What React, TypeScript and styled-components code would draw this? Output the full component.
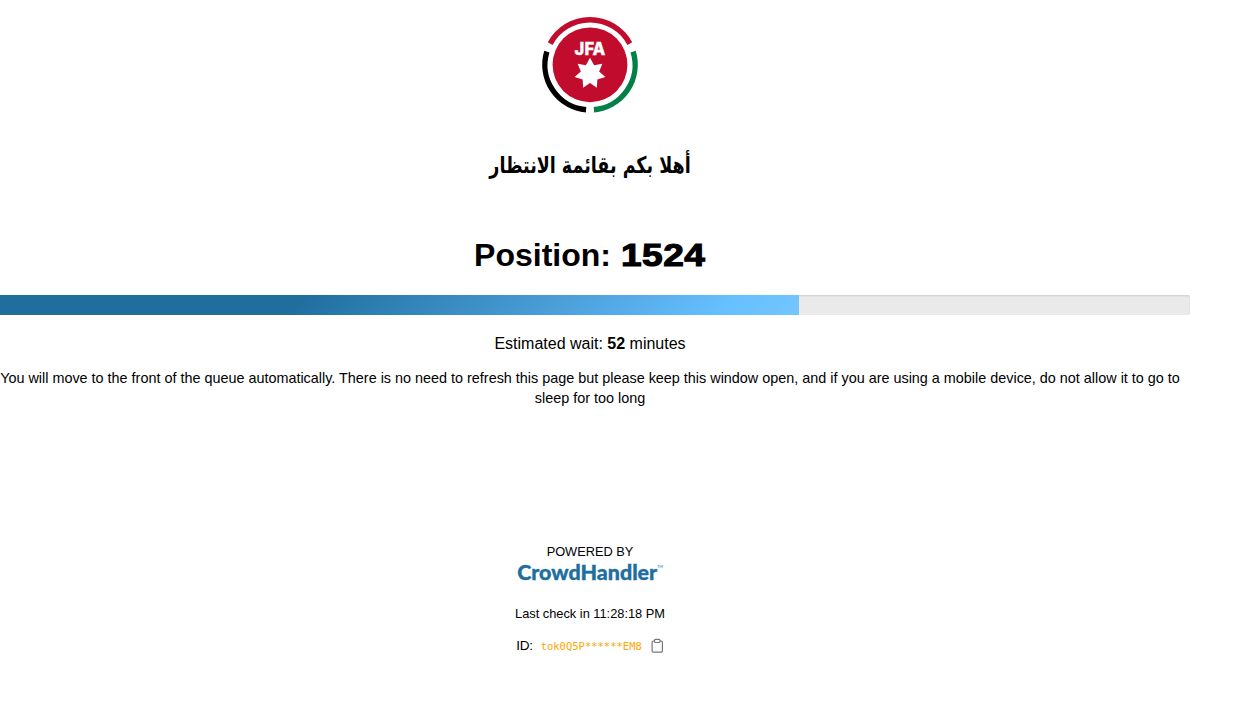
import React from "react";
import styled, { createGlobalStyle } from "styled-components";

const GlobalStyle = createGlobalStyle`
  body {
    margin: 0;
    background: #fff;
    color: #000;
    font-family: "Liberation Sans", Arial, sans-serif;
    overflow: hidden;
  }
`;

const Page = styled.main`
  display: flex;
  flex-direction: column;
  align-items: center;
  width: 1200px;
  margin-left: -10px;
  padding-top: 15px;
  text-align: center;
`;

const Crest = styled.svg`
  display: block;
  width: 100px;
  height: 100px;
`;

const Welcome = styled.h2`
  margin: 35px 0 0;
  height: 36px;
  font: bold 23px/31px "DejaVu Sans Condensed", "DejaVu Sans", sans-serif;
  font-stretch: condensed;
  white-space: nowrap;
  transform: scaleX(0.846);
`;

const Position = styled.h1`
  display: flex;
  justify-content: center;
  gap: 10px;
  margin: 50px 0 0;
  height: 38px;
  font-size: 32px;
  line-height: 38px;
  white-space: nowrap;
`;

const PositionNumber = styled.span`
  width: 85px;
  text-align: left;
  letter-spacing: 0.4px;
  transform: scaleX(1.16);
  transform-origin: 0 50%;
  -webkit-text-stroke: 1.1px #000;
`;

const Track = styled.div`
  width: 100%;
  height: 20px;
  margin-top: 21px;
  background: #eaeaea;
  border-radius: 2px;
  box-shadow: inset 0 1px 2px rgba(0, 0, 0, 0.12);
  overflow: hidden;
`;

const Fill = styled.div`
  height: 100%;
  background: linear-gradient(135deg, #206e9e 0%, #206e9e 38%, #66bfff 90%, #74c6ff 100%);
`;

const Wait = styled.p`
  margin: 19px 0 0;
  font-size: 16px;
  line-height: 20px;
`;

const Notice = styled.p`
  margin: 14px 0 0;
  font-size: 14.4px;
  line-height: 20px;
`;

const Small = styled.p<{ $top: number }>`
  margin: ${(p) => p.$top}px 0 0;
  font-size: 12.8px;
  line-height: 16px;
`;

const Wordmark = styled.svg`
  display: block;
  width: 148px;
  height: 26px;
`;

const IdRow = styled.div`
  display: flex;
  align-items: center;
  height: 20px;
  margin-top: 13px;
  font-size: 13.6px;
  letter-spacing: -0.3px;
`;

const Token = styled.code`
  margin: 2px 9px 0 8px;
  color: orange;
  font: 10.5px/14px "DejaVu Sans Mono", monospace;
  letter-spacing: 0;
`;

const ClipboardIcon = styled.svg`
  width: 13px;
  height: 16px;
  margin-top: 1px;
`;

const starPoints = Array.from({ length: 14 }, (_, i) => {
  const r = i % 2 ? 9.4 : 15.8;
  const a = (i * Math.PI) / 7;
  return `${(50 + r * Math.sin(a)).toFixed(2)},${(58.6 - r * Math.cos(a)).toFixed(2)}`;
}).join(" ");

const arc = (from: number, to: number) => {
  const at = (d: number) => {
    const a = (d * Math.PI) / 180;
    return `${(50 + 45.1 * Math.cos(a)).toFixed(2)} ${(49.8 + 45.1 * Math.sin(a)).toFixed(2)}`;
  };
  return `M${at(from)} A45.1 45.1 0 0 1 ${at(to)}`;
};

export default function App() {
  return (
    <>
      <GlobalStyle />
      <Page>
        <Crest viewBox="0 0 100 100">
          <g fill="none" strokeWidth="5.4">
            <path d={arc(208, 332)} stroke="#c10c2d" />
            <path d={arc(-17, 85)} stroke="#007f46" />
            <path d={arc(95, 197)} stroke="#000" />
          </g>
          <circle cx="50" cy="49.8" r="37.4" fill="#c10c2d" />
          <text
            x="34.6"
            y="40.2"
            fill="#fff"
            stroke="#fff"
            strokeWidth="0.3"
            fontFamily="Inter, sans-serif"
            fontWeight="800"
            fontSize="16.8"
            textLength="30.8"
            lengthAdjust="spacingAndGlyphs"
          >
            JFA
          </text>
          <polygon points={starPoints} fill="#fff" />
        </Crest>
        <Welcome dir="rtl" lang="ar">أهلا بكم بقائمة الانتظار</Welcome>
        <Position>
          <span>Position:</span>
          <PositionNumber>1524</PositionNumber>
        </Position>
        <Track>
          <Fill style={{ width: "67.4%" }} />
        </Track>
        <Wait>
          Estimated wait: <b>52</b> minutes
        </Wait>
        <Notice>
          You will move to the front of the queue automatically. There is no need to refresh this page
          but please keep this window open, and if you are using a mobile device, do not allow it to go
          to sleep for too long
        </Notice>
        <Small $top={136}>POWERED BY</Small>
        <Wordmark viewBox="0 0 148 26">
          <text
            x="1.2"
            y="20"
            fill="#206e9e"
            stroke="#206e9e"
            strokeWidth="0.35"
            fontFamily="Lato, sans-serif"
            fontWeight="900"
            fontSize="21.5"
            textLength="140"
            lengthAdjust="spacingAndGlyphs"
          >
            CrowdHandler
          </text>
          <text x="141" y="8" fill="#206e9e" fontFamily="Lato, sans-serif" fontSize="3.8">
            TM
          </text>
        </Wordmark>
        <Small $top={20}>Last check in 11:28:18 PM</Small>
        <IdRow>
          ID:
          <Token>tok0Q5P******EM8</Token>
          <ClipboardIcon viewBox="0 0 13 16" fill="none" stroke="#777" strokeWidth="1.2">
            <path d="M3.5 3H2.3A1.2 1.2 0 0 0 1.1 4.2V13A1.2 1.2 0 0 0 2.3 14.2H10.2A1.2 1.2 0 0 0 11.4 13V4.2A1.2 1.2 0 0 0 10.2 3H9" />
            <rect x="3.5" y="1.3" width="5.5" height="3.2" rx="1" />
          </ClipboardIcon>
        </IdRow>
      </Page>
    </>
  );
}
